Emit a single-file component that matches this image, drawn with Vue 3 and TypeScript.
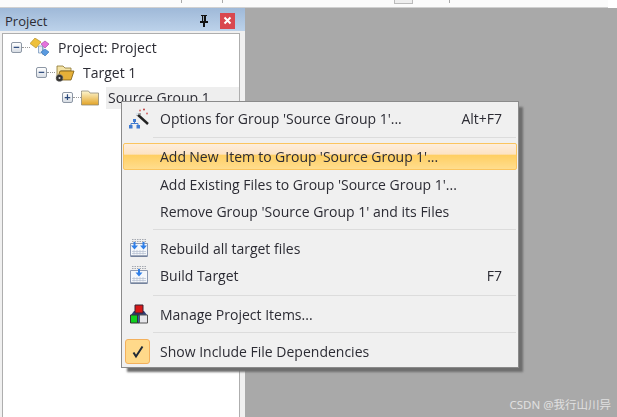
<template>
  <div class="page">
    <div class="toolbar">
      <span v-for="x in toolbarTicks" :key="x" class="toolbar__tick" :style="{ left: x + 'px' }"></span>
      <span class="toolbar__box"></span>
      <span class="toolbar__notch"></span>
    </div>
    <div class="main">
      <aside class="panel">
        <header class="panel__title">
          <span>Project</span>
          <div class="panel__actions">
            <svg width="10" height="12" viewBox="0 0 10 12">
              <path d="M2 0h6v1H7v5h2v2H6v4H4V8H1V6h2V1H2z" fill="#111" />
              <path d="M4 1h1v5H4z" fill="#9ab" />
            </svg>
            <button class="panel__close">
              <svg width="9" height="9" viewBox="0 0 9 9">
                <path d="M1.500 1.500l6 6M7.500 1.500l-6 6" stroke="#fff" stroke-width="2" />
              </svg>
            </button>
          </div>
        </header>
        <div class="tree">
          <div class="tree__row">
            <span class="tree__toggle">−</span>
            <span class="tree__dots"></span>
            <svg class="tree__icon" width="20" height="20" viewBox="0 0 20 20">
              <path d="M8 9h5v8" stroke="#6a8ab0" stroke-width="1" fill="none" />
              <path d="M8.500 8h4v7h-4z" fill="#e6edf6" stroke="#7a9ac0" stroke-width=".8" />
              <path d="M0 5.500L5 0l6 4-5 6z" fill="#eec03c" stroke="#a98420" stroke-width=".6" />
              <path d="M11 6l4-3 4 3-4 4z" fill="#e472dc" stroke="#a040a0" stroke-width=".6" />
              <path d="M11 14l4-3 4 3-4 4z" fill="#5a9ae0" stroke="#3070b0" stroke-width=".6" />
            </svg>
            <span class="tree__label">Project: Project</span>
          </div>
          <div class="tree__row tree__row--l1">
            <span class="tree__toggle">−</span>
            <span class="tree__dots"></span>
            <svg class="tree__icon" width="20" height="20" viewBox="0 0 20 20">
              <path d="M2 3h6l2 2h6v3H6l-3 9H2z" fill="#f4e3a6" stroke="#8b7330" stroke-width=".8" />
              <path d="M5 8h14l-3 9H2z" fill="#e6b038" stroke="#7a5c14" stroke-width=".8" />
              <circle cx="4.500" cy="15" r="3.500" fill="#333" />
              <circle cx="4.500" cy="15" r="3.500" fill="none" stroke="#999" stroke-width="1" stroke-dasharray="1 1" />
              <circle cx="4.500" cy="15" r="1" fill="#ddd" />
            </svg>
            <span class="tree__label">Target 1</span>
          </div>
          <div class="tree__row tree__row--l2">
            <span class="tree__toggle">+</span>
            <span class="tree__dots"></span>
            <svg class="tree__icon" width="20" height="20" viewBox="0 0 20 20">
              <defs>
                <linearGradient id="folder" x1="0" y1="0" x2="0" y2="1">
                  <stop offset="0" stop-color="#fdf6d0" />
                  <stop offset="1" stop-color="#e2a326" />
                </linearGradient>
              </defs>
              <path d="M.500 4.500V3h7L9 5h8.500v12H.500z" fill="url(#folder)" stroke="#8f8a78" stroke-width=".8" />
            </svg>
            <span class="tree__label tree__label--selected">Source Group 1</span>
          </div>
        </div>
      </aside>
      <div class="workspace"></div>
    </div>

    <div class="menu">
      <template v-for="item in menuItems" :key="item.label">
        <div class="menu__sep" v-if="item.sepBefore" :style="{ marginTop: item.sepBefore + 'px' }"></div>
        <div class="menu__item" :class="{ 'menu__item--active': item.active }" :style="{ height: item.height + 'px' }">
          <span class="menu__icon" :class="{ 'menu__icon--checked': item.icon === 'check' }">
            <svg v-if="item.icon === 'wizard'" width="24" height="24" viewBox="0 0 24 24">
              <path d="M11 7l11 10" stroke="#222" stroke-width="2.400" />
              <path d="M10 6l2 2" stroke="#dfe8f0" stroke-width="2.400" />
              <circle cx="14" cy="3.500" r="1" fill="#d76a6a" />
              <circle cx="18" cy="2.500" r="1" fill="#c04040" />
              <circle cx="21" cy="6.500" r="1" fill="#d76a6a" />
              <circle cx="14" cy="7" r="1" fill="#888" />
              <path d="M7 12h3v3H7zM3 18h3.500v3.500H3zM10.500 18H14v3.500h-3.500z" fill="#3f7ad0" />
              <path d="M8.500 15v1.500M5 18v-1.500h7V18" stroke="#3f7ad0" fill="none" />
            </svg>
            <svg v-else-if="item.icon === 'rebuild' || item.icon === 'build'" class="menu__svg-up" width="20" height="20" viewBox="0 0 20 20">
              <path d="M1.500 5.500h17v13h-17z" fill="#f4f7fb" stroke="#8d9ab2" />
              <path d="M2 18h16" stroke="#64748f" stroke-width="1.200" />
              <path d="M3 13.500h14M3 15.500h14M5 12v4.500M8 12v4.500M11 12v4.500M14 12v4.500" stroke="#b4bfd0" stroke-width=".7" />
              <path d="M3 1.500h14M3 3.500h14" stroke="#a4a8b0" stroke-width="1.200" stroke-dasharray="1.500 1" />
              <template v-if="item.icon === 'rebuild'">
                <path d="M4.500 4h2v3.500H9L5.500 11.500 2 7.500h2.500zM13.500 4h2v3.500H18l-3.500 4-3.500-4h2.500z" fill="#2f7fe8" />
              </template>
              <path v-else d="M9 4h2v3.500h2.500L10 11.500 6.500 7.500H9z" fill="#2f7fe8" />
            </svg>
            <svg v-else-if="item.icon === 'items'" class="menu__svg-up" width="20" height="20" viewBox="0 0 20 20">
              <path d="M5 7h10l3 4H2z" fill="#2e3f78" />
              <path d="M6 1h8v8H6z" fill="#d81818" stroke="#3a2030" />
              <path d="M1.500 11h7v8h-7z" fill="#10d020" stroke="#333" />
              <path d="M8.500 11h2v8h-2z" fill="#3060a8" stroke="#333" />
              <path d="M10.500 11h8v8h-8z" fill="#e6e6ea" stroke="#555" />
            </svg>
            <svg v-else-if="item.icon === 'check'" width="14" height="14" viewBox="0 0 14 14">
              <path d="M2.500 7.500l2.500 4L11.500 1.500" fill="none" stroke="#1f2937" stroke-width="2" />
            </svg>
          </span>
          <span class="menu__label">{{ item.label }}</span>
          <span class="menu__key" v-if="item.shortcut">{{ item.shortcut }}</span>
        </div>
      </template>
    </div>

    <div class="watermark">CSDN @我行山川异</div>
  </div>
</template>

<script setup lang="ts">
interface MenuItem {
  label: string;
  height: number;
  icon?: string;
  shortcut?: string;
  active?: boolean;
  sepBefore?: number;
}

const toolbarTicks: number[] = [181, 222, 449];

const menuItems: MenuItem[] = [
  { label: "Options for Group 'Source Group 1'...", height: 33, icon: 'wizard', shortcut: 'Alt+F7' },
  { label: "Add New  Item to Group 'Source Group 1'...", height: 27, active: true, sepBefore: 2 },
  { label: "Add Existing Files to Group 'Source Group 1'...", height: 28 },
  { label: "Remove Group 'Source Group 1' and its Files", height: 27 },
  { label: 'Rebuild all target files', height: 27, icon: 'rebuild', sepBefore: 4 },
  { label: 'Build Target', height: 27, icon: 'build', shortcut: 'F7' },
  { label: 'Manage Project Items...', height: 27, icon: 'items', sepBefore: 6 },
  { label: 'Show Include File Dependencies', height: 27, icon: 'check', sepBefore: 4 }
];
</script>

<style>
html,
body {
  margin: 0;
  background: #a9a9a9;
}
</style>

<style scoped>
.page {
  position: relative;
  width: 617px;
  height: 417px;
  overflow: hidden;
  display: flex;
  flex-direction: column;
  font-family: 'Open Sans', 'Noto Sans', sans-serif;
  color: #2c2c34;
}

.toolbar {
  position: relative;
  flex: none;
  height: 7px;
  background: #fbfbfb;
  border-bottom: 1px solid #d0d0d0;
}

.toolbar__tick {
  position: absolute;
  top: 0;
  width: 1px;
  height: 3px;
  background: #aaa;
}

.toolbar__box {
  position: absolute;
  top: 0;
  left: 394px;
  width: 17px;
  height: 3px;
  border: 1px solid #bbb;
  border-top: none;
  background: #eee;
}

.toolbar__notch {
  position: absolute;
  top: 0;
  right: 0;
  width: 9px;
  height: 8px;
  background: #fff;
}

.main {
  flex: 1;
  display: flex;
  min-height: 0;
}

.panel {
  flex: none;
  width: 245px;
  box-sizing: border-box;
  padding-right: 5px;
  display: flex;
  flex-direction: column;
  background: #f0f0f0;
}

.panel__title {
  flex: none;
  height: 23px;
  margin-right: -5px;
  padding: 2px 10px 0 5px;
  box-sizing: border-box;
  display: flex;
  align-items: center;
  justify-content: space-between;
  background: linear-gradient(to bottom, #9fb9d8, #bcd2ea);
  font-size: 13px;
}

.panel__actions {
  display: flex;
  align-items: center;
  gap: 11px;
}

.panel__close {
  width: 15px;
  height: 16px;
  padding: 0;
  border: none;
  display: flex;
  align-items: center;
  justify-content: center;
  background: #d9474f;
}

.tree {
  flex: 1;
  margin: 2px 0 0 2px;
  padding-top: 1px;
  border: 1px solid #aeaeae;
  border-bottom: none;
  background: #fff;
  filter: blur(0.35px);
}

.tree__row {
  height: 25px;
  padding-left: 8px;
  display: flex;
  align-items: center;
  font-size: 14px;
}

.tree__row--l1 {
  padding-left: 33px;
}

.tree__row--l2 {
  padding-left: 59px;
}

.tree__toggle {
  flex: none;
  width: 9px;
  height: 9px;
  border: 1px solid #8d97a5;
  border-radius: 2px;
  background: linear-gradient(to bottom, #fff, #d8dde4);
  display: flex;
  align-items: center;
  justify-content: center;
  font: 700 11px/9px 'Liberation Sans', sans-serif;
  color: #2c4a7c;
}

.tree__dots {
  flex: none;
  width: 8px;
  border-top: 1px dotted #999;
}

.tree__icon {
  flex: none;
  display: block;
}

.tree__label {
  margin-left: 8px;
  line-height: 22px;
}

.tree__label--selected {
  flex: 1;
  margin-left: 5px;
  padding-left: 2px;
  background: #eeeeee;
}

.menu {
  position: absolute;
  left: 121px;
  top: 101px;
  width: 396px;
  height: 265px;
  border: 1px solid #8b8b8b;
  background: #f0f0f0;
  box-shadow: 5px 5px 2px -1px #6e6e6e;
  font-size: 14px;
  filter: blur(0.35px);
}

.menu__sep {
  height: 1px;
  margin-left: 31px;
  margin-right: 2px;
  margin-bottom: 5px;
  background: #dcdcdc;
}

.menu__item {
  display: flex;
  align-items: center;
  box-sizing: border-box;
  margin: 0 1px;
  padding-right: 15px;
}

.menu__item--active {
  border: 1px solid #fbc55f;
  border-radius: 2px;
  background: linear-gradient(to bottom, #fdeedd 0%, #fde3c4 40%, #ffcf63 46%, #ffdd8e 100%);
}

.menu__item--active .menu__label {
  margin-left: -1px;
  word-spacing: -0.3px;
}

.menu__icon {
  flex: none;
  width: 25px;
  height: 25px;
  margin: 0 10px 0 2px;
  display: flex;
  align-items: center;
  justify-content: center;
  box-sizing: border-box;
}

.menu__svg-up {
  margin-top: -2px;
  margin-left: 3px;
}

.menu__icon--checked {
  border: 1px solid #f3b05c;
  border-radius: 3px;
  background: #ffd98a;
}

.menu__label {
  flex: 1;
  white-space: pre;
}

.menu__key {
  flex: none;
}

.workspace {
  flex: 1;
  background: #a9a9a9;
}

.watermark {
  position: absolute;
  right: 6px;
  bottom: 5px;
  font: 11.5px 'Noto Sans', 'Noto Sans CJK SC', sans-serif;
  color: #e0e0e0;
}
</style>
